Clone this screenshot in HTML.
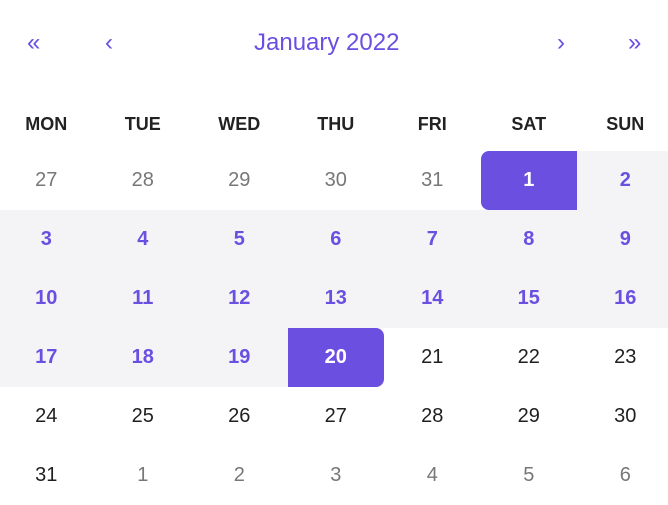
<!DOCTYPE html>
<html><head><style>
body{margin:0;width:668px;height:502px;background:#fff;font-family:"Liberation Sans",Arial,sans-serif;overflow:hidden;position:relative}
.nav{position:absolute;top:23px;height:40px;line-height:40px;color:#6a4fe0;font-size:24px}
.c{position:absolute;width:96.5px;height:59px;line-height:59px;text-align:center;font-size:20px;color:#1f1f1f}
.h{position:absolute;top:114px;width:96.5px;text-align:center;font-size:18px;font-weight:bold;color:#222}
.o{color:#777}
.r{background:#f4f4f7;color:#6a4fe0;font-weight:bold}
.s{background:#6a4fe0;color:#fff;font-weight:bold}
</style></head><body>
<div class="nav" style="left:27px">«</div>
<div class="nav" style="left:105px">‹</div>
<div class="nav" style="left:254px">January 2022</div>
<div class="nav" style="left:557px">›</div>
<div class="nav" style="left:628px">»</div>
<div id="g"></div>
<script>
var g=document.getElementById('g'),H=['MON','TUE','WED','THU','FRI','SAT','SUN'],s='';
H.forEach(function(t,i){s+='<div class="h" style="left:'+(i*96.5-2)+'px">'+t+'</div>';});
var d=[27,28,29,30,31,1,2,3,4,5,6,7,8,9,10,11,12,13,14,15,16,17,18,19,20,21,22,23,24,25,26,27,28,29,30,31,1,2,3,4,5,6];
d.forEach(function(v,k){var r=Math.floor(k/7),c=k%7,cl='c',st='';
if(k<5||k>=36)cl+=' o';else if(k==5){cl+=' s';st='border-radius:8px 0 0 8px;';}
else if(k==24){cl+=' s';st='border-radius:0 8px 8px 0;';}
else if(k>5&&k<24)cl+=' r';
s+='<div class="'+cl+'" style="'+st+'left:'+(c*96.5-2)+'px;top:'+(151+r*59)+'px">'+v+'</div>';});
g.innerHTML=s;
</script>
</body></html>
